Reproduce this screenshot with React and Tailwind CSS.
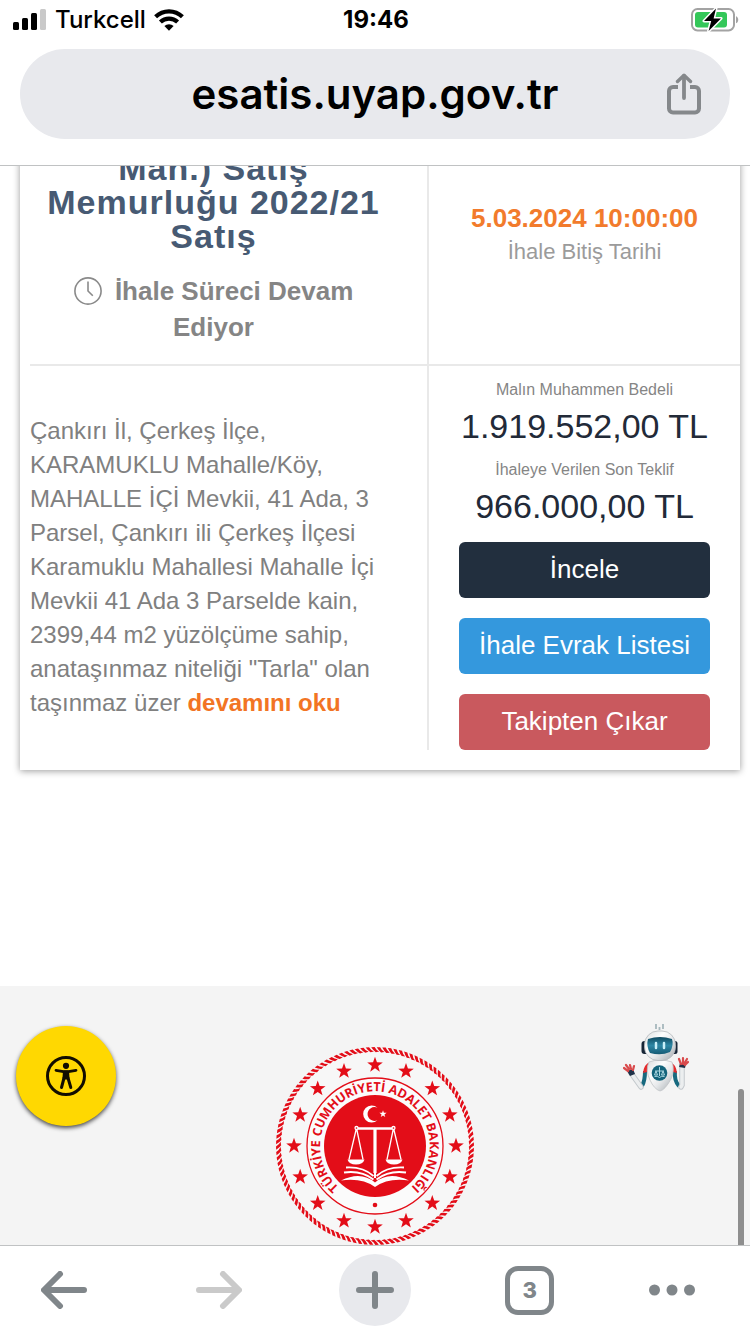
import React from "react";

const RED = "#e30d18";

function starPoints(cx, cy, outer, inner) {
  return Array.from({ length: 10 }, (_, i) => {
    const r = i % 2 === 0 ? outer : inner;
    const a = (Math.PI / 5) * i - Math.PI / 2;
    return `${(cx + r * Math.cos(a)).toFixed(2)},${(cy + r * Math.sin(a)).toFixed(2)}`;
  }).join(" ");
}

function SignalIcon() {
  return (
    <svg width="34" height="22" viewBox="0 0 34 22" aria-hidden="true">
      <rect x="0" y="13" width="6" height="8" rx="1.5" />
      <rect x="9" y="9" width="6" height="12" rx="1.5" />
      <rect x="18" y="4" width="6" height="17" rx="1.5" />
      <rect x="27" y="0" width="6" height="21" rx="1.5" fill="#c9c9c9" />
    </svg>
  );
}

function WifiIcon() {
  return (
    <svg width="30" height="22" viewBox="0 0 30 22" fill="none" stroke="#000" strokeWidth="4.2" aria-hidden="true">
      <path d="M1.6 7.8A19.2 19.2 0 0 1 28.4 7.8" />
      <path d="M6.4 13A12.4 12.4 0 0 1 23.6 13" />
      <path d="M15 21.8L10.4 17A6.6 6.6 0 0 1 19.6 17Z" fill="#000" stroke="none" />
    </svg>
  );
}

function BatteryIcon() {
  return (
    <svg width="48" height="24" viewBox="0 0 48 24" aria-hidden="true">
      <rect x="1" y="1" width="42" height="21.4" rx="5.5" fill="#fff" stroke="#a3a3a3" strokeWidth="2" />
      <path d="M45 8.3c3 1 3 6 0 7z" fill="#a3a3a3" />
      <rect x="4" y="4" width="32" height="15.4" rx="3" fill="#34c759" />
      <path d="M25 .5L13 13h7.2L17.6 23 30 10.4h-7.4z" fill="#000" stroke="#fff" strokeWidth="3" strokeLinejoin="round" paintOrder="stroke" />
    </svg>
  );
}

function ShareIcon() {
  return (
    <svg width="34" height="42" viewBox="0 0 34 42" fill="none" stroke="#85888b" strokeWidth="4" strokeLinecap="round" strokeLinejoin="round" aria-hidden="true">
      <path d="M11 14H6a4 4 0 0 0-4 4v17.500a4 4 0 0 0 4 4h22a4 4 0 0 0 4-4V18a4 4 0 0 0-4-4h-5" strokeLinecap="butt" />
      <path d="M17 25V3" strokeWidth="3.8" />
      <path d="M10.500 8.500L17 2.200l6.500 6.300" strokeWidth="3.4" />
    </svg>
  );
}

function ClockIcon() {
  return (
    <svg className="mr-[6px] inline-block align-[-5px]" width="28" height="28" viewBox="0 0 28 28" fill="none" stroke="#8a8a8a" strokeWidth="1.6" aria-hidden="true">
      <circle cx="14" cy="14" r="13.100" />
      <path d="M14 4.500V14l4.800 4.800" />
    </svg>
  );
}

function AccessibilityIcon() {
  return (
    <svg width="40" height="40" viewBox="0 0 40 40" fill="none" stroke="#120d00" strokeLinecap="round" strokeLinejoin="round" aria-hidden="true">
      <circle cx="20" cy="20" r="18.500" strokeWidth="3" />
      <circle cx="20" cy="9.800" r="3.100" fill="#120d00" stroke="none" />
      <path d="M10 14.300L17.500 15.600h5L30 14.300" strokeWidth="2.800" />
      <path d="M18.400 16h3.200l.4 6h-4z" fill="#120d00" strokeWidth="3" />
      <path d="M18 22l-2.500 9.500M22 22l2.800 9.500" strokeWidth="3" />
    </svg>
  );
}

function Emblem() {
  const stars = Array.from({ length: 16 }, (_, i) => {
    const a = (i * Math.PI) / 8;
    return starPoints(100 + 81 * Math.sin(a), 100 - 81 * Math.cos(a), 8.2, 3.3);
  });
  return (
    <svg width="200" height="200" viewBox="0 0 200 200" role="img" aria-label="Adalet Bakanlığı" className="block">
      <circle cx="100" cy="100" r="98" fill="#f7f7f7" />
      {Array.from({ length: 112 }, (_, i) => (
        <path
          key={i}
          d="M96.200 1.200L99.600 1Q101.200 4.200 104.200 5.600L100.800 6.200Q98.600 4.800 96.200 1.200Z"
          fill={RED}
          transform={`rotate(${(i * 360) / 112} 100 100)`}
        />
      ))}
      {stars.map((p, i) => (
        <polygon key={i} points={p} fill={RED} />
      ))}
      <circle cx="100" cy="100" r="68" fill="#fbfbfb" stroke={RED} strokeWidth="1.300" />
      <circle cx="100" cy="100" r="51" fill={RED} />
      <path id="emblem-ring" d="M100 154.800A54.800 54.800 0 1 1 100.010 154.800" fill="none" />
      <text fill={RED} fontSize="12.500" fontWeight="700" fontFamily="'Open Sans', 'Noto Sans', sans-serif" textAnchor="middle">
        <textPath href="#emblem-ring" startOffset="50%">TÜRKİYE CUMHURİYETİ ADALET BAKANLIĞI</textPath>
      </text>
      <circle cx="100" cy="159" r="2.300" fill={RED} />
      <path d="M102.500 61.800A8.500 8.500 0 1 0 102.500 74.200A6.900 6.900 0 1 1 102.500 61.800Z" fill="#fff" />
      <polygon points={starPoints(108, 68, 3.800, 1.500)} fill="#fff" />
      <g fill="none" stroke="#fff" strokeWidth="1.300">
        <path d="M80 82.500h40" strokeWidth="2.400" />
        <path d="M100 82v45" strokeWidth="3.200" />
        <path d="M100 126v6" strokeWidth="2" />
        <path d="M81.500 82L74 113.500M81.500 82L88 113.500M118.500 82L112 113.500M118.500 82l7.500 31.500" />
        <circle cx="81.500" cy="82" r="1.500" fill={RED} />
        <circle cx="118.500" cy="82" r="1.500" fill={RED} />
        <path d="M98.500 130Q88 120.500 71 121.500M101.500 130Q112 120.500 129 121.500" strokeWidth="1.800" />
        <path d="M98.500 133.500Q86 124 69 126.500M101.500 133.500Q114 124 131 126.500" strokeWidth="2" />
      </g>
      <path d="M66 134.500Q86 124.500 100 136.500Q114 124.500 134 134.500Q113 131.500 100 141Q87 131.500 66 134.500Z" fill="#fff" />
      <path d="M72.500 113.500h17q-1.500 5-8.500 5t-8.500-5zM110.500 113.500h17q-1.500 5-8.500 5t-8.500-5z" fill="#fff" />
    </svg>
  );
}

function RobotIcon() {
  return (
    <svg width="66" height="70" viewBox="0 0 66 70" aria-hidden="true">
      <defs>
        <linearGradient id="shell" x1="0" x2="1" y1="0" y2="1">
          <stop offset="0" stopColor="#d9dcdd" />
          <stop offset=".35" stopColor="#fdfdfd" />
          <stop offset=".6" stopColor="#e6e8ea" />
          <stop offset="1" stopColor="#a3a9ae" />
        </linearGradient>
        <linearGradient id="visor" x1="0" x2="0" y1="0" y2="1">
          <stop offset="0" stopColor="#0f4a60" />
          <stop offset=".5" stopColor="#2d87a5" />
          <stop offset="1" stopColor="#155a74" />
        </linearGradient>
      </defs>
      <path d="M33 2v5M40 2v5M36.500 5v3" stroke="#a7b8bd" strokeWidth="1.800" />
      <rect x="18.500" y="19" width="7" height="13" rx="3" fill="#172536" />
      <rect x="48.500" y="19" width="6" height="13" rx="2.500" fill="#172536" />
      <path d="M22 49Q22 59 19 64M52 49Q51 59 56 64" fill="none" stroke="#17697f" strokeWidth="4" />
      <path d="M8 51L18 65M59 46v17L58 65" stroke="#c3c8cc" strokeWidth="5.500" strokeLinecap="round" fill="none" />
      <path d="M8 51L18 65M59 46v17L58 65" stroke="#eceeef" strokeWidth="3.500" strokeLinecap="round" fill="none" />
      <path d="M4 49l6-2 2 5-5 2zM57 41l6 1-1 4-6-1z" fill="#203249" />
      <path d="M5 49L1 46M6 47L3 43M8 47L7 43M10 48l1-4M58 42l-2-5M60 42V36M61 42l3-5M62 43l3-3" stroke="#d94a4c" strokeWidth="2.200" strokeLinecap="round" />
      <path d="M27 40q-6 2-7 11l4-1 4-7zM47 40q6 2 7 11l-4-1-4-7z" fill="#e52a2c" />
      <path d="M26 40Q37 36 49 40Q52 48 48 57Q42 68 37 69Q31 67 27 58Q22 48 26 40Z" fill="url(#shell)" stroke="#c0c4c7" strokeWidth=".8" />
      <rect x="21.500" y="9" width="31" height="29.500" rx="13.500" fill="url(#shell)" stroke="#b5b9bc" strokeWidth=".8" />
      <path d="M25 17Q37 13 49 17Q51 23 47 30Q38 34 27 31Q23 24 25 17Z" fill="url(#visor)" />
      <path d="M33 21v5M41 21v5" stroke="#c9eff8" strokeWidth="2.500" strokeLinecap="round" />
      <circle cx="36.500" cy="51" r="7.800" fill="#14647b" />
      <path d="M36.500 45v9M32 49h9M31.500 54.500q3-1 5 1q2-2 5-1M33 49l-1.500 4h3zM40 49l-1.500 4h3z" stroke="#a9d5df" fill="none" strokeWidth="1" />
    </svg>
  );
}

function ArrowLeft() {
  return (
    <svg width="46" height="38" viewBox="0 0 46 38" fill="none" stroke="currentColor" strokeWidth="6" strokeLinecap="round" strokeLinejoin="round" aria-hidden="true">
      <path d="M43 19H4M19 3L3 19l16 16" />
    </svg>
  );
}

function ArrowRight() {
  return (
    <svg width="46" height="38" viewBox="0 0 46 38" fill="none" stroke="currentColor" strokeWidth="6" strokeLinecap="round" strokeLinejoin="round" aria-hidden="true">
      <path d="M3 19h39M27 3l16 16-16 16" />
    </svg>
  );
}

function Price({ label, value }) {
  return (
    <div>
      <dt className="text-[16px] leading-[24px] text-[#858585]">{label}</dt>
      <dd className="text-[34px] leading-[48px] text-[#222a38]">{value}</dd>
    </div>
  );
}

export default function App() {
  return (
    <div className="flex h-screen flex-col bg-white font-['Liberation_Sans',Arial,sans-serif]">
      <header className="shrink-0 border-b border-[#c0c2c3] bg-white font-[Inter,sans-serif] text-black">
        <div className="grid h-10 grid-cols-3 items-center pr-[11px] pl-[13px]">
          <div className="flex items-center gap-2">
            <SignalIcon />
            <span className="text-[24px] leading-[30px] font-medium">Turkcell</span>
            <WifiIcon />
          </div>
          <time className="text-center text-[24px] leading-[30px] font-bold">19:46</time>
          <div className="flex justify-end">
            <BatteryIcon />
          </div>
        </div>
        <div className="px-5 pt-[9px] pb-[26px]">
          <div className="grid h-[90px] grid-cols-[64px_1fr_64px] items-center rounded-full bg-[#e8e9ed] px-[14px]">
            <a href="#adres" className="col-start-2 text-center text-[42px] leading-[60px] font-semibold">
              esatis.uyap.gov.tr
            </a>
            <button type="button" aria-label="Paylaş" className="flex justify-center">
              <ShareIcon />
            </button>
          </div>
        </div>
      </header>

      <main className="relative flex min-h-0 flex-1 flex-col overflow-hidden">
        <article className="-mt-10 ml-5 mr-[10px] grid shrink-0 grid-cols-[1fr_311px] bg-white pb-5 pl-[10px] shadow-[0_1px_7px_rgba(0,0,0,0.4)]">
          <div className="border-r-2 border-b-2 border-[#e9e9e9] pt-[25px] pr-[30px] pb-[19px] text-center">
            <h2 className="text-[34px] leading-[34px] font-bold tracking-[1px] text-[#475a73]">
              Mah.) Satış Memurluğu 2022/21 Satış
            </h2>
            <p className="mt-5 px-4 text-[26px] leading-[36px] font-bold text-[#858585]">
              <ClockIcon /> İhale Süreci Devam Ediyor
            </p>
          </div>
          <div className="border-b-2 border-[#e9e9e9] pt-[74px] text-center">
            <p className="text-[26px] leading-[36px] font-bold text-[#f27b2c]">5.03.2024 10:00:00</p>
            <p className="text-[22px] leading-[32px] text-[#9b9b9b]">İhale Bitiş Tarihi</p>
          </div>
          <div className="border-r-2 border-[#e9e9e9] pt-12 pr-[30px] text-[24px] leading-[34px] text-[#808080]">
            <p>
              Çankırı İl, Çerkeş İlçe, KARAMUKLU Mahalle/Köy, MAHALLE İÇİ Mevkii, 41 Ada, 3 Parsel, Çankırı ili Çerkeş
              İlçesi Karamuklu Mahallesi Mahalle İçi Mevkii 41 Ada 3 Parselde kain, 2399,44 m2 yüzölçüme sahip,
              anataşınmaz niteliği "Tarla" olan taşınmaz üzer{" "}
              <a href="#devam" className="font-bold text-[#f27424]">
                devamını oku
              </a>
            </p>
          </div>
          <div className="pt-3 text-center">
            <dl className="flex flex-col gap-2">
              <Price label="Malın Muhammen Bedeli" value="1.919.552,00 TL" />
              <Price label="İhaleye Verilen Son Teklif" value="966.000,00 TL" />
            </dl>
            <div className="mt-3 flex flex-col gap-5 px-[30px] text-[26px] leading-[36px] text-white">
              <button type="button" className="rounded-[6px] bg-[#222f3e] pt-[9px] pb-[11px]">
                İncele
              </button>
              <button type="button" className="rounded-[6px] bg-[#3498dd] pt-[9px] pb-[11px]">
                İhale Evrak Listesi
              </button>
              <button type="button" className="rounded-[6px] bg-[#c9595e] pt-[9px] pb-[11px]">
                Takipten Çıkar
              </button>
            </div>
          </div>
        </article>

        <footer className="mt-[216px] flex flex-1 shrink-0 justify-center bg-[#f4f4f4] pt-[60px]">
          <Emblem />
        </footer>

        <button
          type="button"
          aria-label="Erişilebilirlik"
          className="absolute bottom-[119px] left-4 flex size-[100px] items-center justify-center rounded-full bg-[#ffd801] shadow-[0_2px_4px_rgba(0,0,0,0.7)]"
        >
          <AccessibilityIcon />
        </button>
        <button type="button" aria-label="Sohbet asistanı" className="absolute right-[61px] bottom-[153px]">
          <RobotIcon />
        </button>
        <div className="absolute right-[6px] bottom-0 h-[156px] w-[6px] rounded-t-full bg-[#8e8e8e]" />
      </main>

      <nav className="flex h-[89px] shrink-0 items-center justify-between border-t border-[#c0c2c3] bg-white pr-[55px] pl-7 text-[#80868a]">
        <button type="button" aria-label="Geri" className="flex size-[72px] items-center justify-center">
          <ArrowLeft />
        </button>
        <button type="button" aria-label="İleri" disabled className="flex size-[72px] items-center justify-center text-[#cacaca]">
          <ArrowRight />
        </button>
        <button type="button" aria-label="Yeni sekme" className="flex size-[72px] items-center justify-center rounded-full bg-[#e8e9ed]">
          <svg width="38" height="38" viewBox="0 0 38 38" fill="none" stroke="currentColor" strokeWidth="6" strokeLinecap="round" aria-hidden="true">
            <path d="M19 3v32M3 19h32" />
          </svg>
        </button>
        <button type="button" aria-label="3 sekme" className="flex size-[72px] items-center justify-center">
          <span className="flex size-[49px] items-center justify-center rounded-[13px] border-[5px] border-current font-[Inter,sans-serif] text-[22px] leading-[24px] font-extrabold">
            3
          </span>
        </button>
        <button type="button" aria-label="Menü">
          <svg width="46" height="12" viewBox="0 0 46 12" fill="currentColor" aria-hidden="true">
            <circle cx="5.500" cy="6" r="5.500" />
            <circle cx="23" cy="6" r="5.500" />
            <circle cx="40.500" cy="6" r="5.500" />
          </svg>
        </button>
      </nav>
    </div>
  );
}
